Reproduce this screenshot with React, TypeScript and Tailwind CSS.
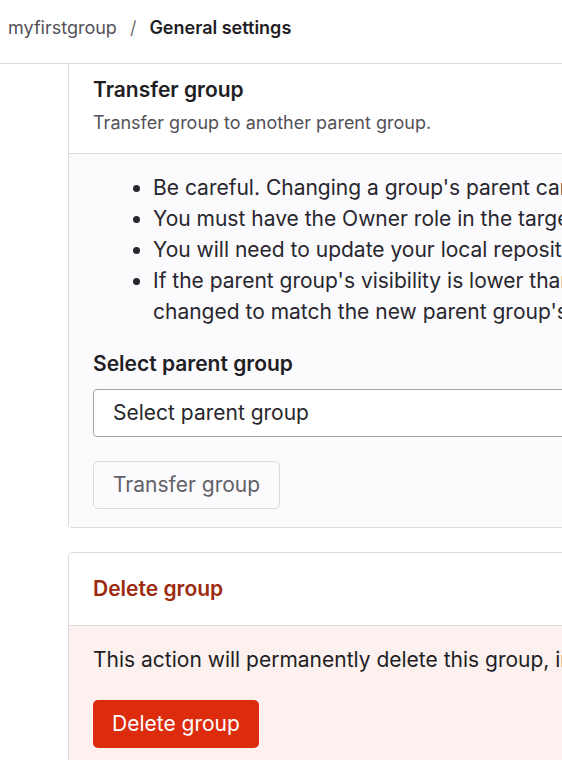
export default function App() {
  const notes = [
    "Be careful. Changing a group's parent can have unintended side effects.",
    "You must have the Owner role in the target parent group.",
    "You will need to update your local repositories to point to the new location.",
  ];

  return (
    <div
      className="h-[760px] w-[562px] overflow-hidden bg-white text-[#1f1e24]"
      style={{ fontFamily: "Inter, 'Noto Sans', sans-serif" }}
    >
      <header className="flex h-[64px] items-start gap-[13px] border-b border-[#dcdcde] px-2 pt-[16px] text-[18px] leading-[24px]">
        <span className="text-[#535158]">myfirstgroup</span>
        <span className="text-[#737278]">/</span>
        <span className="font-semibold text-[#1f1e24]">General settings</span>
      </header>

      <main className="w-[1000px] pl-[68px]">
        <section className="rounded-b-[4px] border border-t-0 border-[#dcdcde]">
          <div className="bg-white px-6 pb-[19px] pt-[13px]">
            <h2 className="text-[21px] font-semibold leading-[26px]">Transfer group</h2>
            <p className="mt-[9px] text-[18px] leading-[22px] text-[#535158]">
              Transfer group to another parent group.
            </p>
          </div>
          <div className="border-t border-[#dcdcde] bg-[#fbfafd] px-6 pb-[18px] pt-[18px]">
            <ul className="list-disc pl-[60px] text-[21px] leading-[31px] text-[#28272d]">
              {notes.map((n) => (
                <li key={n} className="whitespace-nowrap">{n}</li>
              ))}
              <li className="whitespace-nowrap">
                If the parent group's visibility is lower than the group's current visibility, visibility levels for subgroups and projects will be
                <br />
                changed to match the new parent group's visibility.
              </li>
            </ul>
            <label className="mt-[24px] block text-[21px] font-semibold leading-[26px]">
              Select parent group
            </label>
            <div className="mt-[12px] flex h-[48px] items-center rounded-[4px] border border-[#a4a3a8] bg-white px-[19px] text-[21px] text-[#28272d]">
              Select parent group
            </div>
            <button
              disabled
              className="mt-[24px] h-[48px] rounded-[5px] border border-[#dcdcde] bg-[#fbfafd] px-[19px] text-[21px] text-[#626168]"
            >
              Transfer group
            </button>
          </div>
        </section>

        <section className="mt-[24px] overflow-hidden rounded-t-[4px] border border-[#dcdcde]">
          <div className="bg-white px-6 pb-[23px] pt-[23px]">
            <h2 className="text-[21px] font-semibold leading-[26px] text-[#9c2a0e]">Delete group</h2>
          </div>
          <div className="border-t border-[#dcdcde] bg-[#fcf1ef] px-6 pb-[20px] pt-[21px]">
            <p className="whitespace-nowrap text-[21px] leading-[26px] text-[#1f1e24]">
              This action will permanently delete this group, including its subgroups and projects.
            </p>
            <button className="mt-[27px] h-[48px] rounded-[5px] bg-[#dd2b0e] px-[19px] text-[21px] text-white">
              Delete group
            </button>
          </div>
        </section>
      </main>
    </div>
  );
}
